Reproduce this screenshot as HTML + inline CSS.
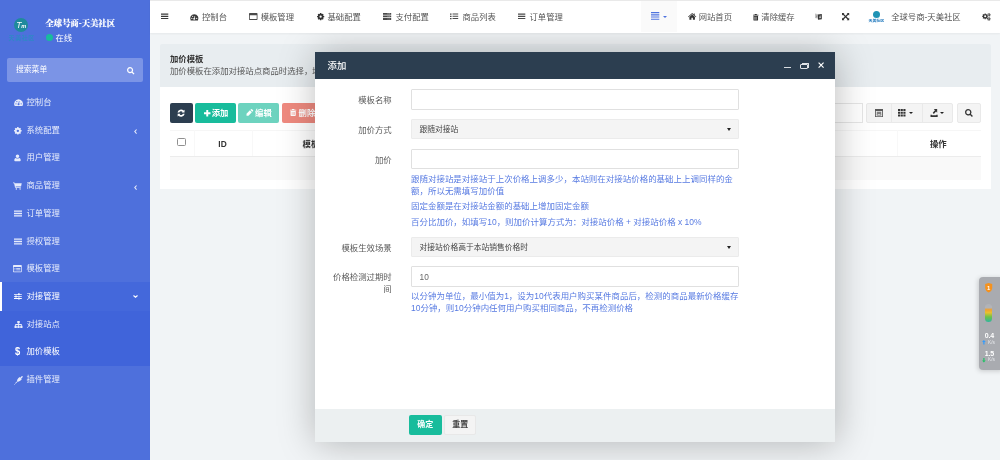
<!DOCTYPE html>
<html lang="zh-CN">
<head>
<meta charset="utf-8">
<title>加价模板</title>
<style>
*{box-sizing:border-box;margin:0;padding:0}
html,body{width:1000px;height:460px;overflow:hidden}
body{position:relative;background:#f1f4f6;font-family:"Liberation Sans","Noto Sans CJK SC",sans-serif;font-size:8.35px;color:#444;line-height:1}
.abs{position:absolute;white-space:nowrap}
svg{display:block;overflow:visible}
#side{position:absolute;left:0;top:0;width:150px;height:460px;background:#4e70dc}
.nm{position:absolute;left:45.5px;top:17.5px;color:#fff;font-size:8.35px;line-height:12px;font-weight:900;font-family:"Liberation Serif","Noto Serif CJK SC",serif;white-space:nowrap;-webkit-text-stroke:.15px #fff}
.st{position:absolute;left:55.5px;top:32px;color:#fff;font-size:8.35px;line-height:12px;white-space:nowrap}
.dot{position:absolute;left:45.5px;top:34.2px;width:7px;height:7px;border-radius:50%;background:#18bc9c}
.search{position:absolute;left:7px;top:58px;width:136px;height:24px;border-radius:2px;background:#7b94e6}
.search span{position:absolute;left:9px;top:0;line-height:24px;color:#fff;font-size:7.8px}
.mi{position:absolute;left:0;width:150px;height:27.7px;line-height:27.7px;color:#e6ebfb;font-size:8.35px}
.mi span{position:absolute;left:26.5px;top:0;white-space:nowrap}
.mi.act{background:#4468db;color:#fff;border-left:2px solid #fff}
.mi.act span{left:24.5px}
.mi.sub{background:#4064da}
#hdr{position:absolute;left:150px;top:0;width:850px;height:33px;background:#fff;border-top:1px solid #e9e9e9;box-shadow:0 1px 2px rgba(0,0,0,.05)}
.t{position:absolute;top:0;line-height:34px;font-size:8.35px;color:#555;white-space:nowrap}
#phead{position:absolute;left:160px;top:44px;width:830.5px;height:43px;background:#e8edf0;border-radius:2px 2px 0 0}
#pbody{position:absolute;left:160px;top:87px;width:830.5px;height:102px;background:#fff}
.btn{position:absolute;top:103px;height:20px;border-radius:2px;color:#fff;font-size:8.35px;line-height:20px;white-space:nowrap}
.gbtn{position:absolute;top:103px;height:20px;background:#f4f4f4;border:1px solid #e9e9e9}
#mbg{position:absolute;left:314.5px;top:52px;width:520.4px;height:389.5px;background:#fff;box-shadow:1px 1px 35px rgba(0,0,0,.27)}
#mtitle{position:absolute;left:314.5px;top:52px;width:520.4px;height:27px;background:#2c3e50}
#mfoot{position:absolute;left:314.5px;top:409.4px;width:520.4px;height:32.6px;background:#ecf0f1}
.lbl{position:absolute;width:80px;left:311.7px;text-align:right;font-size:8.4px;color:#5a5a5a;line-height:12px}
.inp{position:absolute;left:411px;width:327.6px;height:20px;border:1px solid #e0e0e0;background:#fff;border-radius:1px}
.sel{background:#f4f4f4;border-color:#ebebeb}
.sel span{position:absolute;left:7.6px;top:0;line-height:19px;font-size:7.75px;color:#444;white-space:nowrap}
.sel i{position:absolute;right:6.6px;top:7.6px;border:2.8px solid transparent;border-top:3.1px solid #222;border-bottom:0;width:0;height:0}
.help{position:absolute;left:411px;color:#587be2;font-size:8.47px;line-height:12px;white-space:nowrap}
#wrap{position:absolute;left:0;top:0;width:1000px;height:460px;will-change:transform}
#hwrap{position:absolute;left:0;top:0;width:0;height:0;z-index:5}
</style>
</head>
<body>
<div id="wrap">
<div id="side">
  <div class="abs" style="left:14px;top:18px;width:14px;height:14px;border-radius:50%;background:#1f8a9c"></div>
  <div class="abs" style="left:14px;top:18px;width:14px;line-height:14px;text-align:center;color:#fff;font-size:8.6px;font-style:italic;font-family:'Liberation Sans',sans-serif;letter-spacing:-.4px">T<span style="font-size:5.6px;font-weight:bold">m</span></div>
  <div class="abs" style="left:8.6px;top:33.8px;font-size:6px;line-height:8px;font-weight:bold;color:#2f88c6;letter-spacing:.55px">天美社区</div>
  <div class="nm">全球号商-天美社区</div>
  <div class="dot"></div><div class="st">在线</div>
  <div class="search"><span>搜索菜单</span><svg style="position:absolute;left:120px;top:8.6px;color:#fff;" width="7.6" height="7.6" viewBox="0 0 16 16" preserveAspectRatio="none" fill="currentColor"><path fill-rule="evenodd" d="M6.500 0a6.500 6.500 0 0 1 5.400 10.100l3.900 3.900-1.900 1.900-3.900-3.900A6.500 6.500 0 1 1 6.500 0zM6.500 2.600a3.900 3.900 0 1 0 0 7.800 3.900 3.900 0 0 0 0-7.800z"/></svg></div>
  <div class="mi" style="top:89px"><svg style="position:absolute;left:13.6px;top:10.2px;" width="9.2" height="7.2" viewBox="0 0 18 14" preserveAspectRatio="none" fill="currentColor"><path fill-rule="evenodd" d="M9 0.5a9 9 0 0 0-7.6 13.3h15.2A9 9 0 0 0 9 .5zM3.9 10.6a1.2 1.2 0 1 1 0-2.4 1.2 1.2 0 0 1 0 2.4zM5.6 6.2a1.2 1.2 0 1 1 0-2.4 1.2 1.2 0 0 1 0 2.4zM14.1 10.6a1.2 1.2 0 1 1 0-2.4 1.2 1.2 0 0 1 0 2.4zM10.9 4.4l-.9 4a2 2 0 1 1-1.3-.3l1-4z"/></svg><span>控制台</span></div>
  <div class="mi" style="top:116.7px"><svg style="position:absolute;left:14px;top:10px;" width="7.7" height="7.7" viewBox="0 0 16 16" preserveAspectRatio="none" fill="currentColor"><path fill-rule="evenodd" d="M15.86 6.50L15.86 9.50L14.32 9.52L13.54 11.40L14.62 12.50L12.50 14.62L11.40 13.54L9.52 14.32L9.50 15.86L6.50 15.86L6.48 14.32L4.60 13.54L3.50 14.62L1.38 12.50L2.46 11.40L1.68 9.52L0.14 9.50L0.14 6.50L1.68 6.48L2.46 4.60L1.38 3.50L3.50 1.38L4.60 2.46L6.48 1.68L6.50 0.14L9.50 0.14L9.52 1.68L11.40 2.46L12.50 1.38L14.62 3.50L13.54 4.60L14.32 6.48ZM5.50 8.00a2.50 2.50 0 1 0 5.00 0a2.50 2.50 0 1 0 -5.00 0Z"/></svg><span>系统配置</span><svg style="position:absolute;left:133.9px;top:12.6px;" width="3.1" height="5.16667" viewBox="0 0 6 10" preserveAspectRatio="none" fill="currentColor"><path d="M5 1L1.500 5 5 9" stroke="currentColor" stroke-width="2" fill="none"/></svg></div>
  <div class="mi" style="top:144.4px"><svg style="position:absolute;left:14.2px;top:9.8px;" width="7" height="7.8" viewBox="0 0 14 16" preserveAspectRatio="none" fill="currentColor"><path d="M7 1a3.6 3.6 0 1 1 0 7.2A3.6 3.6 0 0 1 7 1zM3.6 8.2c1 .8 2.1 1.2 3.4 1.2s2.400-.4 3.4-1.2c2 .3 3 2.300 3 4.800 0 1.300-.9 2-2.100 2H2.700C1.500 15 .6 14.300.6 13c0-2.500 1-4.500 3-4.800z"/></svg><span>用户管理</span></div>
  <div class="mi" style="top:172.1px"><svg style="position:absolute;left:13.2px;top:10.2px;" width="9" height="7.6" viewBox="0 0 17 15" preserveAspectRatio="none" fill="currentColor"><path d="M0 .8h2.800l.5 1.700H16.500l-1.300 6.200H5l.3 1.300h9.400v1.500H4L2 2.400H0zM6 12.300a1.400 1.400 0 1 1 0 2.700 1.400 1.400 0 0 1 0-2.700zM13 12.300a1.400 1.400 0 1 1 0 2.700 1.400 1.400 0 0 1 0-2.700z"/></svg><span>商品管理</span><svg style="position:absolute;left:133.9px;top:12.6px;" width="3.1" height="5.16667" viewBox="0 0 6 10" preserveAspectRatio="none" fill="currentColor"><path d="M5 1L1.500 5 5 9" stroke="currentColor" stroke-width="2" fill="none"/></svg></div>
  <div class="mi" style="top:199.8px"><svg style="position:absolute;left:13.7px;top:10.3px;" width="8" height="7" viewBox="0 0 16 14" preserveAspectRatio="none" fill="currentColor"><path d="M0 1h16v2.6H0zM0 5.7h16v2.6H0zM0 10.4h16v2.6H0z"/></svg><span>订单管理</span></div>
  <div class="mi" style="top:227.5px"><svg style="position:absolute;left:13.7px;top:10.3px;" width="8" height="7" viewBox="0 0 16 14" preserveAspectRatio="none" fill="currentColor"><path d="M0 1h16v2.6H0zM0 5.7h16v2.6H0zM0 10.4h16v2.6H0z"/></svg><span>授权管理</span></div>
  <div class="mi" style="top:255.2px"><svg style="position:absolute;left:13.4px;top:10.2px;" width="8.8" height="7.2" viewBox="0 0 18 14" preserveAspectRatio="none" fill="currentColor"><path fill-rule="evenodd" d="M1.500 0h15A1.500 1.500 0 0 1 18 1.500v11a1.500 1.500 0 0 1-1.500 1.500h-15A1.500 1.500 0 0 1 0 12.500v-11A1.500 1.500 0 0 1 1.500 0zM1.500 4v8.500h15V4zM3 5.600h2v1.500H3zM6.500 5.600h8.500v1.500H6.500zM3 8.700h2v1.500H3zM6.500 8.700h8.500v1.500H6.500z"/></svg><span>模板管理</span></div>
  <div class="mi act" style="top:282.4px;line-height:28.7px;height:29px"><svg style="position:absolute;left:11.8px;top:10.8px;" width="7.8" height="6.825" viewBox="0 0 16 14" preserveAspectRatio="none" fill="currentColor"><path d="M0 1.800h8.500V.6h3v1.200H16v1.800h-4.500v1.200h-3V3.600H0zM0 6.100h2.500V4.900h3v1.200H16v1.800H5.500v1.200h-3V7.900H0zM0 10.400h8.500V9.200h3v1.200H16v1.800h-4.500v1.200h-3v-1.200H0z"/></svg><span>对接管理</span><svg style="position:absolute;left:131.2px;top:12.6px;" width="5" height="3" viewBox="0 0 10 6" preserveAspectRatio="none" fill="currentColor"><path d="M1 1l4 3.500L9 1" stroke="currentColor" stroke-width="2.200" fill="none"/></svg></div>
  <div class="mi sub" style="top:310.6px"><svg style="position:absolute;left:13.6px;top:10.2px;" width="9" height="7.5" viewBox="0 0 18 15" preserveAspectRatio="none" fill="currentColor"><path d="M6.500 0h5v4.500h-1.700v1.700h5.700v3.300H17V14h-4.600V9.500h1.500V7.800H9.800v1.700h1.500V14H6.700V9.500h1.500V7.800H4.100v1.700h1.500V14H1V9.500h1.500V6.200h5.700V4.500H6.500z"/></svg><span>对接站点</span></div>
  <div class="mi sub" style="top:338.3px;color:#fff"><b class="abs" style="left:15.2px;top:0;font-size:11px;font-weight:bold;transform:scaleX(.85);transform-origin:0 50%">$</b><span>加价模板</span></div>
  <div class="mi" style="top:366px"><svg style="position:absolute;left:13.6px;top:9.8px;" width="8.8" height="8.8" viewBox="0 0 16 16" preserveAspectRatio="none" fill="currentColor"><path d="M15.600.4a1.300 1.300 0 0 1 0 1.800L13 4.800l1.200 1.200-2.300 2.300c-2 2-4.600 2.600-6.700 1.600L2.400 12.700l-.9 2.700-1.500.6.600-1.500 2.700-.900 2.800-2.800C5.100 8.700 5.700 6.100 7.700 4.100L10 1.800l1.200 1.200L13.800.4a1.300 1.300 0 0 1 1.800 0z"/></svg><span>插件管理</span></div>
</div>
<div id="hwrap">
<div id="hdr"></div>
<div id="hbtn" class="abs" style="left:641.2px;top:1px;width:35.4px;height:31px;background:#fafafa"></div>
<svg style="position:absolute;left:160.8px;top:13.3px;color:#3a3a3a;" width="7.3" height="6.6" viewBox="0 0 16 14" preserveAspectRatio="none" fill="currentColor"><path d="M0 1h16v2.6H0zM0 5.7h16v2.6H0zM0 10.4h16v2.6H0z"/></svg>
<svg style="position:absolute;left:190px;top:13.7px;color:#3a3a3a;" width="8.6" height="6.6" viewBox="0 0 18 14" preserveAspectRatio="none" fill="currentColor"><path fill-rule="evenodd" d="M9 0.5a9 9 0 0 0-7.6 13.3h15.2A9 9 0 0 0 9 .5zM3.9 10.6a1.2 1.2 0 1 1 0-2.4 1.2 1.2 0 0 1 0 2.4zM5.6 6.2a1.2 1.2 0 1 1 0-2.4 1.2 1.2 0 0 1 0 2.4zM14.1 10.6a1.2 1.2 0 1 1 0-2.4 1.2 1.2 0 0 1 0 2.4zM10.9 4.4l-.9 4a2 2 0 1 1-1.3-.3l1-4z"/></svg><div class="t" style="left:202px">控制台</div>
<svg style="position:absolute;left:248.8px;top:13.1px;color:#4a4a4a;" width="8.5" height="6.9" viewBox="0 0 18 14" preserveAspectRatio="none" fill="currentColor"><path fill-rule="evenodd" d="M1.500 0h15A1.500 1.500 0 0 1 18 1.500v11a1.500 1.500 0 0 1-1.500 1.500h-15A1.500 1.500 0 0 1 0 12.500v-11A1.500 1.500 0 0 1 1.500 0zM1.700 4.600v7.700h14.600V4.600z"/></svg><div class="t" style="left:260.7px">模板管理</div>
<svg style="position:absolute;left:316.8px;top:13.4px;color:#333;" width="7.3" height="7.3" viewBox="0 0 16 16" preserveAspectRatio="none" fill="currentColor"><path fill-rule="evenodd" d="M15.86 6.50L15.86 9.50L14.32 9.52L13.54 11.40L14.62 12.50L12.50 14.62L11.40 13.54L9.52 14.32L9.50 15.86L6.50 15.86L6.48 14.32L4.60 13.54L3.50 14.62L1.38 12.50L2.46 11.40L1.68 9.52L0.14 9.50L0.14 6.50L1.68 6.48L2.46 4.60L1.38 3.50L3.50 1.38L4.60 2.46L6.48 1.68L6.50 0.14L9.50 0.14L9.52 1.68L11.40 2.46L12.50 1.38L14.62 3.50L13.54 4.60L14.32 6.48ZM5.50 8.00a2.50 2.50 0 1 0 5.00 0a2.50 2.50 0 1 0 -5.00 0Z"/></svg><div class="t" style="left:327.5px">基础配置</div>
<svg style="position:absolute;left:382.8px;top:13.1px;color:#4a4a4a;" width="8.2" height="6.9" viewBox="0 0 16 14" preserveAspectRatio="none" fill="currentColor"><path d="M0 0h16v3.600H0zM0 5.200h16v3.600H0zM0 10.400h16V14H0z"/><path fill="#fff" d="M9 1.200h1.400v1.200H9zM11.500 1.200h1.400v1.200h-1.400zM9 6.400h1.400v1.200H9zM11.500 6.400h1.400v1.200h-1.400zM9 11.600h1.400v1.200H9zM11.500 11.600h1.400v1.200h-1.400z"/></svg><div class="t" style="left:395.5px">支付配置</div>
<svg style="position:absolute;left:450px;top:13.3px;color:#4a4a4a;" width="8.2" height="6.6" viewBox="0 0 16 14" preserveAspectRatio="none" fill="currentColor"><path d="M0 .8h3v2.800H0zM5 1.100h11v2.200H5zM0 5.600h3v2.800H0zM5 5.900h11v2.200H5zM0 10.400h3v2.800H0zM5 10.700h11v2.200H5z"/></svg><div class="t" style="left:462.5px">商品列表</div>
<svg style="position:absolute;left:518px;top:13.3px;color:#4a4a4a;" width="7.3" height="6.6" viewBox="0 0 16 14" preserveAspectRatio="none" fill="currentColor"><path d="M0 1h16v2.6H0zM0 5.7h16v2.6H0zM0 10.4h16v2.6H0z"/></svg><div class="t" style="left:529.5px">订单管理</div>
<svg style="position:absolute;left:651px;top:12.2px;color:#4e73df;" width="8.3" height="7.8" viewBox="0 0 16 14" preserveAspectRatio="none" fill="currentColor"><path d="M0 0h16v2.100H0zM0 3.970h16v2.100H0zM0 7.930h16v2.100H0zM0 11.900h16V14H0z"/></svg>
<i class="abs" style="left:663.3px;top:16px;border:2.3px solid transparent;border-top:2.8px solid #4e73df"></i>
<svg style="position:absolute;left:688px;top:13px;color:#333;" width="8.3" height="6.7" viewBox="0 0 18 14" preserveAspectRatio="none" fill="currentColor"><path d="M9 0l3.500 3V1.200h2V4.800L18 7.800l-.9 1L9 2 .9 8.800 0 7.800zM9 3.400l6 5V14h-4.400V9.800H7.400V14H3V8.400z"/></svg><div class="t" style="left:698.7px">网站首页</div>
<svg style="position:absolute;left:752.7px;top:13.5px;color:#333;" width="5.5" height="6.6" viewBox="0 0 12 14" preserveAspectRatio="none" fill="currentColor"><path fill-rule="evenodd" d="M4 0h4l.7 1.400H12v1.800H0V1.400h3.300zM1 4.200h10V12.600A1.400 1.400 0 0 1 9.600 14H2.400A1.400 1.400 0 0 1 1 12.600zM3.500 6v6h.8V6zM5.600 6v6h.8V6zM7.700 6v6h.8V6z"/></svg><div class="t" style="left:761.3px">清除缓存</div>
<svg style="position:absolute;left:815.2px;top:12.8px;color:#333;" width="6.8" height="7.2" viewBox="0 0 16 15" preserveAspectRatio="none" fill="currentColor"><path fill="#c4c4c4" d="M0 1l8 1.500V12L0 10.500z"/><path fill="#666" d="M2 8.400c1.400-.4 2.400-1.400 3-2.700l.7.300C5 7.600 3.900 8.700 2.300 9.200zM2.400 4.500l3.600.5v.9l-3.600-.5z"/><path fill-rule="evenodd" d="M7 3.300L16 2v11l-9 1.300zM9.800 10.800l1.700-5.600h1.300l1.500 5.600h-1.100l-.3-1.200h-1.600l-.4 1.200zm1.600-2.200h1.100l-.5-2.200z"/><path fill-rule="evenodd" fill="none" d="M0 1l8 1.500V12L0 10.500zM2.200 8.300c1.300-.4 2.300-1.300 2.900-2.600l.6.300c-.6 1.500-1.700 2.500-3.200 3zM2.600 4.800l3.200.4v.8l-3.200-.4zM9 3.200L16 2v11l-7 1.300v-1.500l5.500-1V3.800L9 4.700zM10.300 10.500l1.500-5h1.100l1.300 5h-1l-.3-1.100h-1.400l-.3 1.100zm1.400-2h1l-.5-2z"/></svg>
<svg style="position:absolute;left:841.5px;top:13.3px;color:#333;" width="7.2" height="7.2" viewBox="0 0 16 16" preserveAspectRatio="none" fill="currentColor"><path d="M0 0h5.500L3.700 1.800 8 6.100l4.300-4.300L10.500 0H16v5.500l-1.800-1.800L9.900 8l4.300 4.300L16 10.500V16h-5.500l1.800-1.800L8 9.900l-4.300 4.300L5.500 16H0v-5.500l1.800 1.800L6.100 8 1.800 3.700 0 5.500z"/></svg>
<div class="abs" style="left:872.5px;top:11.2px;width:7px;height:7px;border-radius:50%;background:#1f93b5"></div>
<div class="abs" style="left:868.5px;top:18.8px;font-size:3.9px;line-height:4px;color:#2a7fc0;font-weight:bold">天美社区</div>
<div class="t" style="left:891.2px;color:#555">全球号商-天美社区</div>
<svg style="position:absolute;left:981.5px;top:13.4px;color:#333;" width="9" height="7.6" viewBox="0 0 17 16" preserveAspectRatio="none" fill="currentColor"><path fill-rule="evenodd" d="M11.91 5.97L11.91 8.03L10.38 8.05L9.84 9.35L10.91 10.45L9.45 11.91L8.35 10.84L7.05 11.38L7.03 12.91L4.97 12.91L4.95 11.38L3.65 10.84L2.55 11.91L1.09 10.45L2.16 9.35L1.62 8.05L0.09 8.03L0.09 5.97L1.62 5.95L2.16 4.65L1.09 3.55L2.55 2.09L3.65 3.16L4.95 2.62L4.97 1.09L7.03 1.09L7.05 2.62L8.35 3.16L9.45 2.09L10.91 3.55L9.84 4.65L10.38 5.95ZM4.00 7.00a2.00 2.00 0 1 0 4.00 0a2.00 2.00 0 1 0 -4.00 0ZM16.50 3.18L16.50 4.82L15.47 4.80L14.93 5.74L15.46 6.62L14.04 7.45L13.54 6.54L12.46 6.54L11.96 7.45L10.54 6.62L11.07 5.74L10.53 4.80L9.50 4.82L9.50 3.18L10.53 3.20L11.07 2.26L10.54 1.38L11.96 0.55L12.46 1.46L13.54 1.46L14.04 0.55L15.46 1.38L14.93 2.26L15.47 3.20ZM11.80 4.00a1.20 1.20 0 1 0 2.40 0a1.20 1.20 0 1 0 -2.40 0ZM16.50 11.68L16.50 13.32L15.47 13.30L14.93 14.24L15.46 15.12L14.04 15.95L13.54 15.04L12.46 15.04L11.96 15.95L10.54 15.12L11.07 14.24L10.53 13.30L9.50 13.32L9.50 11.68L10.53 11.70L11.07 10.76L10.54 9.88L11.96 9.05L12.46 9.96L13.54 9.96L14.04 9.05L15.46 9.88L14.93 10.76L15.47 11.70ZM11.80 12.50a1.20 1.20 0 1 0 2.40 0a1.20 1.20 0 1 0 -2.40 0Z"/></svg>
</div>
<div id="phead">
  <div class="abs" style="left:10px;top:9px;font-size:8.35px;line-height:12px;font-weight:bold;color:#333">加价模板</div>
  <div class="abs" style="left:10px;top:21px;font-size:8.4px;line-height:12px;color:#555">加价模板在添加对接站点商品时选择，填写后对接商品将按模板规则自动加价</div>
</div>
<div id="pbody"></div>
<div class="btn" style="left:170px;width:22.5px;background:#2c3e50"><svg style="position:absolute;left:7.3px;top:5.9px;color:#fff;" width="8.2" height="8.2" viewBox="0 0 16 16" preserveAspectRatio="none" fill="currentColor"><path d="M1 6.800A7 7 0 0 1 12.950 3.050L14.700 1.300v5.500H9.200l1.500-1.500A3.800 3.800 0 0 0 4.400 6.800zM15 9.200A7 7 0 0 1 3.050 12.950L1.300 14.700V9.200h5.500l-1.500 1.500A3.800 3.800 0 0 0 11.600 9.200z"/></svg></div>
<div class="btn" style="left:195.2px;width:40.5px;background:#18bc9c"><svg style="position:absolute;left:8.6px;top:6.8px;color:#fff;" width="6.5" height="6.5" viewBox="0 0 14 14" preserveAspectRatio="none" fill="currentColor"><path d="M4.900 0h4.200v4.900H14v4.200H9.100V14H4.900V9.100H0V4.900h4.900z"/></svg><b class="abs" style="left:16.5px;top:0">添加</b></div>
<div class="btn" style="left:238.3px;width:40.6px;background:#6dd3bf"><svg style="position:absolute;left:8.2px;top:6.2px;color:#fff;" width="7.2" height="7.2" viewBox="0 0 14 14" preserveAspectRatio="none" fill="currentColor"><path d="M9.900.3a1.300 1.300 0 0 1 1.800 0l2 2a1.300 1.300 0 0 1 0 1.800L12.300 5.500 8.500 1.700zM7.600 2.600l3.800 3.800L4.800 13H1V9.200z"/></svg><b class="abs" style="left:16.8px;top:0">编辑</b></div>
<div class="btn" style="left:281.8px;width:40.6px;background:#ef8a7f"><svg style="position:absolute;left:8.2px;top:6.3px;color:#fff;" width="6.3" height="7" viewBox="0 0 12 14" preserveAspectRatio="none" fill="currentColor"><path fill-rule="evenodd" d="M4 0h4l.7 1.400H12v1.800H0V1.400h3.300zM1 4.200h10V12.600A1.400 1.400 0 0 1 9.600 14H2.400A1.400 1.400 0 0 1 1 12.600zM3.500 6v6h.8V6zM5.600 6v6h.8V6zM7.700 6v6h.8V6z"/></svg><b class="abs" style="left:16.8px;top:0">删除</b></div>
<div class="abs" style="left:740px;top:103px;width:123px;height:20px;border:1px solid #e6e6e6;background:#fff"></div>
<div class="gbtn" style="left:866px;width:25.5px;border-radius:2px 0 0 2px"><svg style="position:absolute;left:8px;top:5.2px;color:#5a5a5a;" width="8" height="8" viewBox="0 0 14 14" preserveAspectRatio="none" fill="currentColor"><path fill-rule="evenodd" d="M0 0h14v14H0zM1.500 3.500v9h11v-9zM3 5h8v1.400H3zM3 7.500h8v3.700H3zM4.300 8.600v1.500h5.400V8.600z"/></svg></div>
<div class="gbtn" style="left:890.5px;width:32px"><svg style="position:absolute;left:6.9px;top:5.2px;color:#333;" width="7.5" height="7.6" viewBox="0 0 14 13" preserveAspectRatio="none" fill="currentColor"><path d="M0 0h4v3.600H0zM5 0h4v3.600H5zM10 0h4v3.600h-4zM0 4.700h4v3.600H0zM5 4.700h4v3.600H5zM10 4.700h4v3.600h-4zM0 9.400h4V13H0zM5 9.400h4V13H5zM10 9.400h4V13h-4z"/></svg><i class="abs" style="left:17.3px;top:8.4px;border:2.4px solid transparent;border-top:2.9px solid #222"></i></div>
<div class="gbtn" style="left:921.5px;width:31.5px;border-radius:0 2px 2px 0"><svg style="position:absolute;left:7.2px;top:5px;color:#333;" width="8.2" height="8" viewBox="0 0 16 14" preserveAspectRatio="none" fill="currentColor"><path d="M7.500 0H14v6.500l-2.200-2.200-4.300 4.300-2.100-2.100 4.300-4.300zM1 10h2.600v.8h8.800V10H15v4H1z"/></svg><i class="abs" style="left:17.5px;top:8.4px;border:2.4px solid transparent;border-top:2.9px solid #222"></i></div>
<div class="gbtn" style="left:956.7px;width:24.6px;border-radius:2px"><svg style="position:absolute;left:7.4px;top:5.4px;color:#333;" width="8" height="8" viewBox="0 0 16 16" preserveAspectRatio="none" fill="currentColor"><path fill-rule="evenodd" d="M6.500 0a6.500 6.500 0 0 1 5.400 10.100l3.900 3.900-1.900 1.900-3.900-3.900A6.500 6.500 0 1 1 6.500 0zM6.500 2.600a3.900 3.900 0 1 0 0 7.800 3.900 3.900 0 0 0 0-7.800z"/></svg></div>
<div class="abs" style="left:170px;top:130px;width:811.3px;height:26.6px;border-bottom:1px solid #ececec;border-top:1px solid #f6f6f6"></div>
<div class="abs" style="left:170px;top:156.6px;width:811.3px;height:23px;background:#f9f9f9"></div>
<div class="abs" style="left:193.5px;top:130px;width:1px;height:26px;background:#f8f8f8"></div>
<div class="abs" style="left:252px;top:130px;width:1px;height:26px;background:#f8f8f8"></div>
<div class="abs" style="left:896.5px;top:130px;width:1px;height:26px;background:#f8f8f8"></div>
<div class="abs" style="left:177px;top:138px;width:8.5px;height:8.2px;border:1px solid #909090;border-radius:1.5px;background:#fff"></div>
<b class="abs" style="left:202.5px;top:137.6px;width:40px;text-align:center;line-height:12px;font-size:8.35px;color:#333">ID</b>
<b class="abs" style="left:302.6px;top:137.6px;line-height:12px;font-size:8.35px;color:#333">模板名称</b>
<b class="abs" style="left:918.3px;top:137.5px;width:40px;text-align:center;line-height:12px;font-size:8.35px;color:#333">操作</b>
<div id="modal">
  <div id="mbg"></div>
  <div id="mtitle"></div>
  <div class="abs" style="left:327.6px;top:52px;line-height:27px;font-size:9.4px;font-weight:500;color:#fff">添加</div>
  <div class="abs" style="left:784px;top:66.8px;width:6.8px;height:1px;background:#d8dce0"></div>
  <div class="abs" style="left:800px;top:63.8px;width:8px;height:5.6px;border:1px solid #dfe2e6;border-top-width:1.6px;border-radius:1px"></div>
  <div class="abs" style="left:801.6px;top:62.6px;width:7.8px;height:5.4px;border:1px solid #dfe2e6;border-top-width:1.4px;border-left:0;border-bottom:0;border-radius:0 1px 0 0"></div>
  <svg class="abs" style="left:818.2px;top:62.2px" width="6.2" height="6.2" viewBox="0 0 10 10"><path d="M1 1l8 8M9 1l-8 8" stroke="#fff" stroke-width="1.9" fill="none"/></svg>
  <div class="lbl" style="top:94.2px">模板名称</div>
  <div class="inp" style="top:89px;height:20.5px"></div>
  <div class="lbl" style="top:123.8px">加价方式</div>
  <div class="inp sel" style="top:119px"><span>跟随对接站</span><i></i></div>
  <div class="lbl" style="top:154px">加价</div>
  <div class="inp" style="top:149px"></div>
  <div class="help" style="top:172.7px">跟随对接站是对接站于上次价格上调多少，本站则在对接站价格的基础上上调同样的金</div>
  <div class="help" style="top:185.1px">额，所以无需填写加价值</div>
  <div class="help" style="top:199.7px">固定金额是在对接站金额的基础上增加固定金额</div>
  <div class="help" style="top:215.5px">百分比加价，如填写10，则加价计算方式为：对接站价格 + 对接站价格 x 10%</div>
  <div class="lbl" style="top:241.5px">模板生效场景</div>
  <div class="inp sel" style="top:237px"><span>对接站价格高于本站销售价格时</span><i></i></div>
  <div class="lbl" style="top:271.4px">价格检测过期时<br>间</div>
  <div class="inp" style="top:266px;height:20.5px"><span class="abs" style="left:7.6px;top:0;line-height:20px;font-size:8.3px;color:#666">10</span></div>
  <div class="help" style="top:290.3px">以分钟为单位，最小值为1，设为10代表用户购买某件商品后，检测的商品最新价格缓存</div>
  <div class="help" style="top:302.3px">10分钟，则10分钟内任何用户购买相同商品，不再检测价格</div>
  <div id="mfoot"></div>
  <b class="abs" style="left:409px;top:415.4px;width:32.6px;height:19.6px;background:#18bc9c;border-radius:2px;color:#fff;font-size:8px;text-align:center;line-height:19.6px">确定</b>
  <b class="abs" style="left:444.4px;top:415.4px;width:31.6px;height:19.6px;background:#f4f4f4;border:1px solid #e8e8e8;border-radius:2px;color:#444;font-size:8px;text-align:center;line-height:17.6px">重置</b>
</div>
<div id="widget" class="abs" style="left:978.7px;top:277px;width:24px;height:92.5px;background:#a9abb0;border-radius:4px 0 0 4px;box-shadow:-1px 1px 5px rgba(0,0,0,.18)"></div>
<svg class="abs" style="left:985.2px;top:283.3px" width="7.4" height="9.4" viewBox="0 0 12 16"><path d="M6 0l6 1.600v6.400c0 4-2.500 6.500-6 8-3.500-1.500-6-4-6-8V1.600z" fill="#f5921e"/><text x="6" y="11.500" font-size="10" font-weight="bold" fill="#fff" text-anchor="middle" font-family="Liberation Sans,sans-serif">1</text></svg>
<div class="abs" style="left:985.2px;top:303.6px;width:7.2px;height:18px;border-radius:3.6px;background:linear-gradient(#b0b2b7 0%,#b2b4b8 20%,#f0a030 32%,#e8c030 48%,#6cc24a 72%,#2fb5a0 100%)"></div>
<div class="abs" style="left:983px;top:332px;width:12.6px;text-align:center;font-size:7px;line-height:8px;color:#fff;font-weight:bold;letter-spacing:-.2px">0.4</div>
<div class="abs" style="left:988px;top:339.6px;font-size:4.8px;line-height:6px;color:#e6e8ec">K/s</div>
<svg class="abs" style="left:981.8px;top:340.3px" width="3.8" height="4.6" viewBox="0 0 8 10"><path d="M4 0l4 4.500H5.300V10H2.700V4.500H0z" fill="#2f9bff"/></svg>
<div class="abs" style="left:983px;top:349.8px;width:12.6px;text-align:center;font-size:7px;line-height:8px;color:#fff;font-weight:bold;letter-spacing:-.2px">1.5</div>
<div class="abs" style="left:988px;top:357.3px;font-size:4.8px;line-height:6px;color:#e6e8ec">K/s</div>
<svg class="abs" style="left:981.8px;top:357.9px" width="3.8" height="4.6" viewBox="0 0 8 10"><path d="M4 10l4-4.500H5.300V0H2.700v5.500H0z" fill="#22c065"/></svg>
</div>
</body>
</html>
